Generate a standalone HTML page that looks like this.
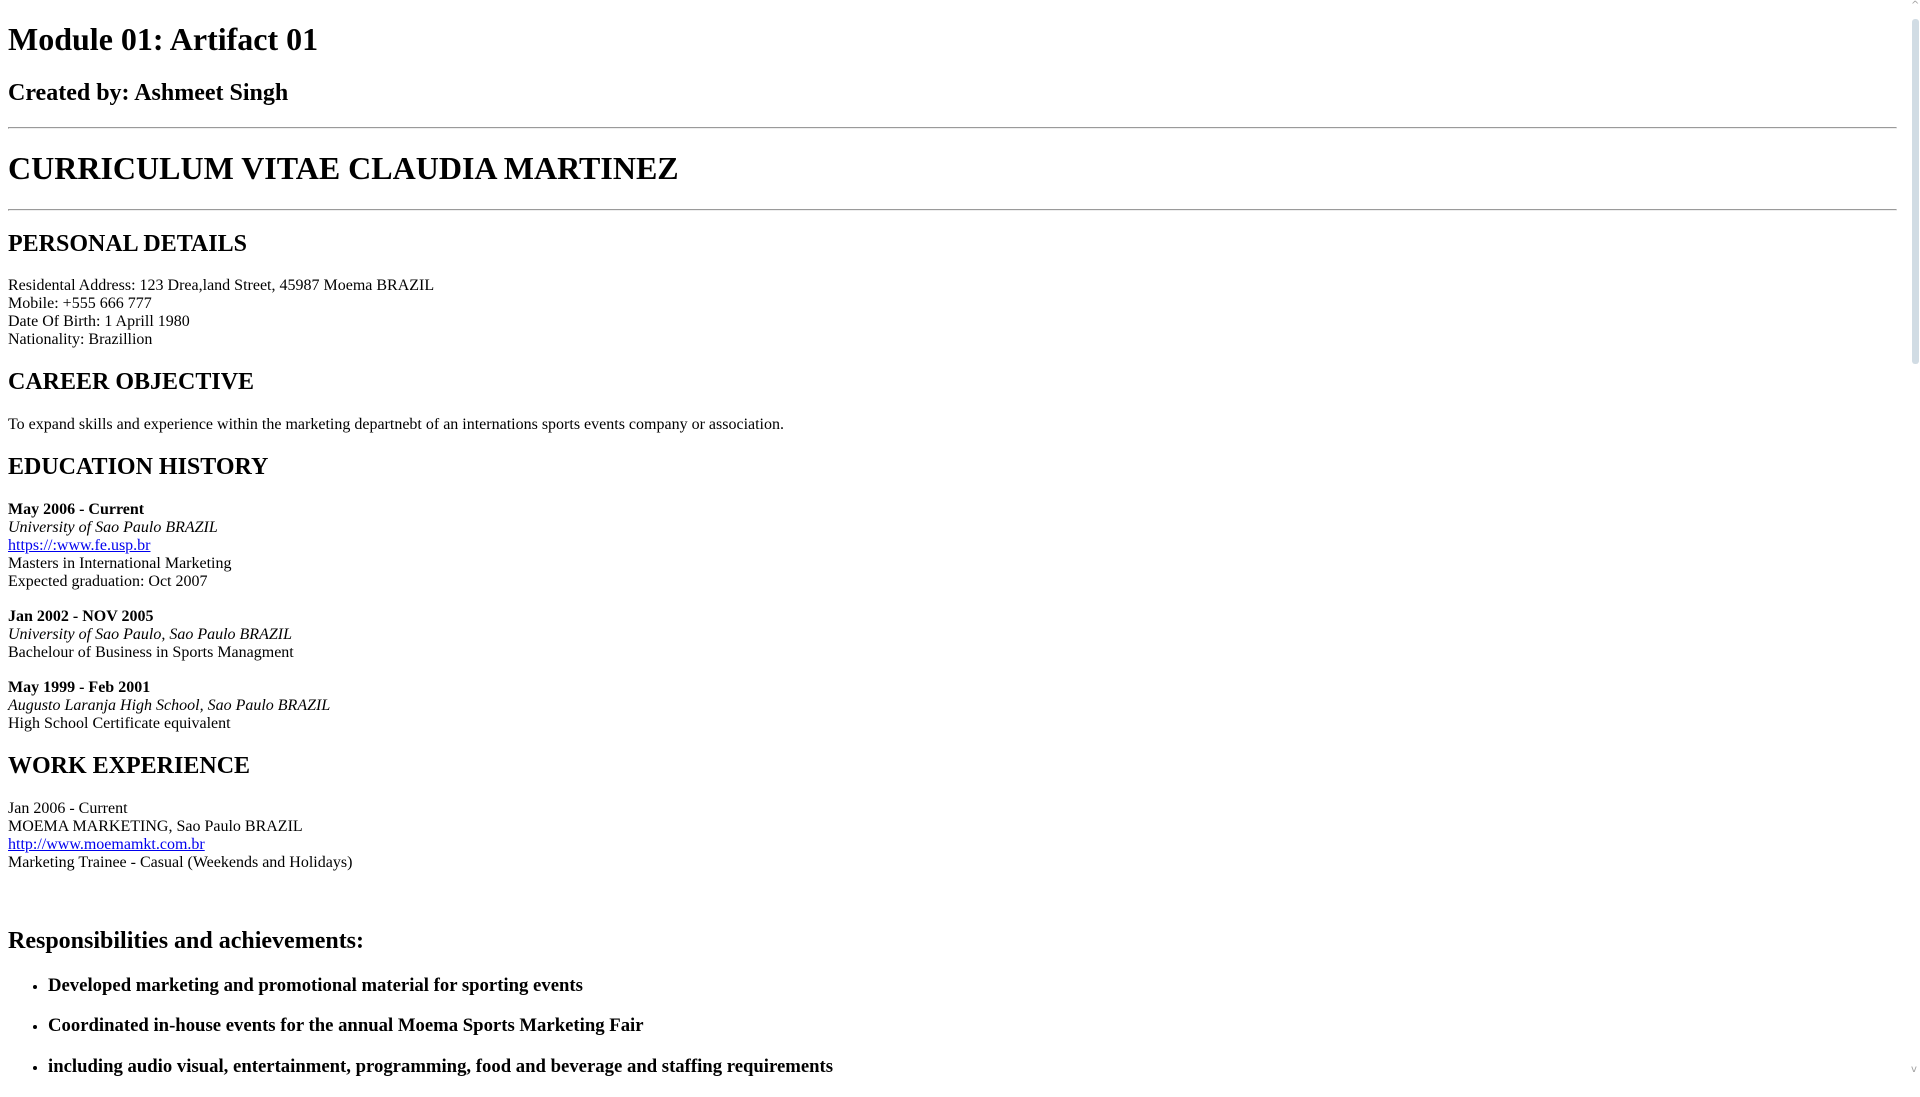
<!DOCTYPE html>
<html>
<head>
<meta charset="utf-8">
<style>
body { font-family: "Liberation Serif", serif; margin: 8px; padding-right: 15px; color: #000; background: #fff; }
p { margin: 17px 0; }
a { color: #0000ee; }
.sb { position: fixed; right: 0; top: 0; width: 17px; height: 1080px; background: #fff; }
.thumb { position: absolute; left: 9px; top: 19px; width: 7px; height: 345px; background: #d1dce4; border-radius: 3px; }
.up, .dn { position: absolute; left: 8px; font: 10px "DejaVu Sans", sans-serif; color: #a0a0a0; }
</style>
</head>
<body>
<h1>Module 01: Artifact 01</h1>
<h2>Created by: Ashmeet Singh</h2>
<hr>
<h1>CURRICULUM VITAE CLAUDIA MARTINEZ</h1>
<hr>
<h2>PERSONAL DETAILS</h2>
<p>Residental Address: 123 Drea,land Street, 45987 Moema BRAZIL<br>
Mobile: +555 666 777<br>
Date Of Birth: 1 Aprill 1980<br>
Nationality: Brazillion</p>
<h2>CAREER OBJECTIVE</h2>
<p>To expand skills and experience within the marketing departnebt of an internations sports events company or association.</p>
<h2>EDUCATION HISTORY</h2>
<p><b>May 2006 - Current</b><br>
<i>University of Sao Paulo BRAZIL</i><br>
<a href="#">https://:www.fe.usp.br</a><br>
Masters in International Marketing<br>
Expected graduation: Oct 2007</p>
<p><b>Jan 2002 - NOV 2005</b><br>
<i>University of Sao Paulo, Sao Paulo BRAZIL</i><br>
Bachelour of Business in Sports Managment</p>
<p><b>May 1999 - Feb 2001</b><br>
<i>Augusto Laranja High School, Sao Paulo BRAZIL</i><br>
High School Certificate equivalent</p>
<h2>WORK EXPERIENCE</h2>
<p>Jan 2006 - Current<br>
MOEMA MARKETING, Sao Paulo BRAZIL<br>
<a href="#">http://www.moemamkt.com.br</a><br>
Marketing Trainee - Casual (Weekends and Holidays)<br><br><br></p>
<h2>Responsibilities and achievements:</h2>
<ul>
<li><h3>Developed marketing and promotional material for sporting events</h3></li>
<li><h3>Coordinated in-house events for the annual Moema Sports Marketing Fair</h3></li>
<li><h3>including audio visual, entertainment, programming, food and beverage and staffing requirements</h3></li>
</ul>
<div class="sb"><div class="up" style="top:0">^</div><div class="thumb"></div><div class="dn" style="top:1064px">v</div></div>
</body>
</html>
